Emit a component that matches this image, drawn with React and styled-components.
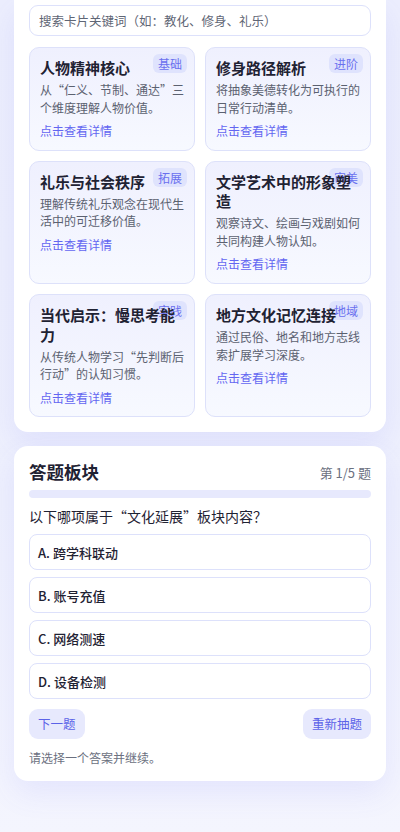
import React, { useState } from "react";
import styled, { createGlobalStyle } from "styled-components";

const GlobalStyle = createGlobalStyle`
	* {
		box-sizing: border-box;
	}

	body {
		margin: 0;
		min-height: 832px;
		font-family: "Noto Sans CJK SC", "Noto Sans", sans-serif;
		background: linear-gradient(180deg, #eceefd 0%, #eef0fd 60%, #f4f5fe 100%);
		color: #1f2233;
	}
`;

const Page = styled.main`
	display: flex;
	flex-direction: column;
	gap: 14px;
	padding: 0 14px 54px;
`;

const Panel = styled.section`
	background: #ffffff;
	border-radius: ${(p) => (p.$cut ? "0 0 14px 14px" : "14px")};
	padding: ${(p) => (p.$cut ? "5px 15px 15px" : "15px 15px 14px")};
	box-shadow: 0 12px 30px rgba(99, 102, 241, 0.1);
`;

const Search = styled.input`
	display: block;
	width: 100%;
	height: 31px;
	padding: 0 9px;
	border: 1px solid #dde1fb;
	border-radius: 9px;
	font-family: inherit;
	font-size: 12.5px;
	color: #1f2233;
	background: #fff;
	outline: none;

	&::placeholder {
		color: #5f6675;
	}
`;

const Grid = styled.div`
	display: grid;
	grid-template-columns: 1fr 1fr;
	gap: 10px;
	margin-top: 11px;
`;

const Card = styled.article`
	position: relative;
	padding: 10px 10px 10px;
	border: 1px solid #dde1fa;
	border-radius: 10px;
	background: linear-gradient(180deg, #eff0fe 0%, #f7f9ff 100%);
	cursor: pointer;
`;

const Tag = styled.span`
	position: absolute;
	top: 6px;
	right: 7px;
	padding: 1px 5px;
	border-radius: 6px;
	background: #dfe3fd;
	color: #6a70ef;
	font-size: 12px;
	line-height: 17px;
`;

const CardTitle = styled.h3`
	position: relative;
	margin: 0;
	font-size: 15px;
	line-height: 19.5px;
	font-weight: 700;
	color: #1f2233;
`;

const CardDesc = styled.p`
	margin: 3.5px 0 0;
	font-size: 12px;
	line-height: 17.6px;
	color: #5b6170;
`;

const More = styled.span`
	display: block;
	margin-top: 6px;
	font-size: 12px;
	line-height: 17.6px;
	color: #6366f1;
`;

const Header = styled.div`
	display: flex;
	align-items: center;
	justify-content: space-between;
`;

const QuizTitle = styled.h2`
	margin: 0;
	font-size: 17.5px;
	line-height: 22px;
	font-weight: 700;
	color: #1f2233;
`;

const Counter = styled.span`
	font-size: 13px;
	color: #6b7080;
`;

const Track = styled.div`
	height: 8px;
	margin-top: 7px;
	border-radius: 4px;
	background: #e7e9fd;
	overflow: hidden;
`;

const Question = styled.p`
	margin: 8px 0 0;
	font-size: 14px;
	line-height: 20px;
	color: #1f2233;
`;

const Options = styled.div`
	display: flex;
	flex-direction: column;
	gap: 7.5px;
	margin-top: 8px;
`;

const Option = styled.button`
	display: block;
	width: 100%;
	height: 35.5px;
	padding: 0 8px;
	border: 1px solid ${(p) => (p.$active ? "#6366f1" : "#dde1fb")};
	border-radius: 8px;
	background: ${(p) => (p.$active ? "#f1f2fe" : "#fff")};
	font-family: inherit;
	font-size: 13px;
	font-weight: 500;
	color: #1f2233;
	text-align: left;
	cursor: pointer;
`;

const Actions = styled.div`
	display: flex;
	justify-content: space-between;
	margin-top: 10px;
`;

const Button = styled.button`
	height: 30px;
	padding: 0 9px;
	border: none;
	border-radius: 9px;
	background: #e7e9fd;
	color: #5b62e8;
	font-family: inherit;
	font-size: 12.5px;
	cursor: pointer;
`;

const Status = styled.p`
	margin: 10px 0 0;
	font-size: 12px;
	line-height: 18px;
	color: #6b7080;
`;

const cards = [
	{ title: "人物精神核心", tag: "基础", desc: "从“仁义、节制、通达”三个维度理解人物价值。" },
	{ title: "修身路径解析", tag: "进阶", desc: "将抽象美德转化为可执行的日常行动清单。" },
	{ title: "礼乐与社会秩序", tag: "拓展", desc: "理解传统礼乐观念在现代生活中的可迁移价值。" },
	{ title: "文学艺术中的形象塑造", tag: "审美", desc: "观察诗文、绘画与戏剧如何共同构建人物认知。" },
	{ title: "当代启示：慢思考能力", tag: "实践", desc: "从传统人物学习“先判断后行动”的认知习惯。" },
	{ title: "地方文化记忆连接", tag: "地域", desc: "通过民俗、地名和地方志线索扩展学习深度。" },
];

const options = ["A. 跨学科联动", "B. 账号充值", "C. 网络测速", "D. 设备检测"];

const App = () => {
	const [keyword, setKeyword] = useState("");
	const [picked, setPicked] = useState(null);

	const shown = cards.filter(
		(c) => !keyword || c.title.includes(keyword) || c.desc.includes(keyword)
	);

	return (
		<>
			<GlobalStyle />
			<Page>
				<Panel $cut>
					<Search
						value={keyword}
						onChange={(e) => setKeyword(e.target.value)}
						placeholder="搜索卡片关键词（如：教化、修身、礼乐）"
					/>
					<Grid>
						{shown.map((c) => (
							<Card key={c.title}>
								<Tag>{c.tag}</Tag>
								<CardTitle>{c.title}</CardTitle>
								<CardDesc>{c.desc}</CardDesc>
								<More>点击查看详情</More>
							</Card>
						))}
					</Grid>
				</Panel>
				<Panel>
					<Header>
						<QuizTitle>答题板块</QuizTitle>
						<Counter>第 1/5 题</Counter>
					</Header>
					<Track />
					<Question>以下哪项属于“文化延展”板块内容？</Question>
					<Options>
						{options.map((o, i) => (
							<Option key={o} $active={picked === i} onClick={() => setPicked(i)}>
								{o}
							</Option>
						))}
					</Options>
					<Actions>
						<Button>下一题</Button>
						<Button>重新抽题</Button>
					</Actions>
					<Status>请选择一个答案并继续。</Status>
				</Panel>
			</Page>
		</>
	);
};

export default App;
